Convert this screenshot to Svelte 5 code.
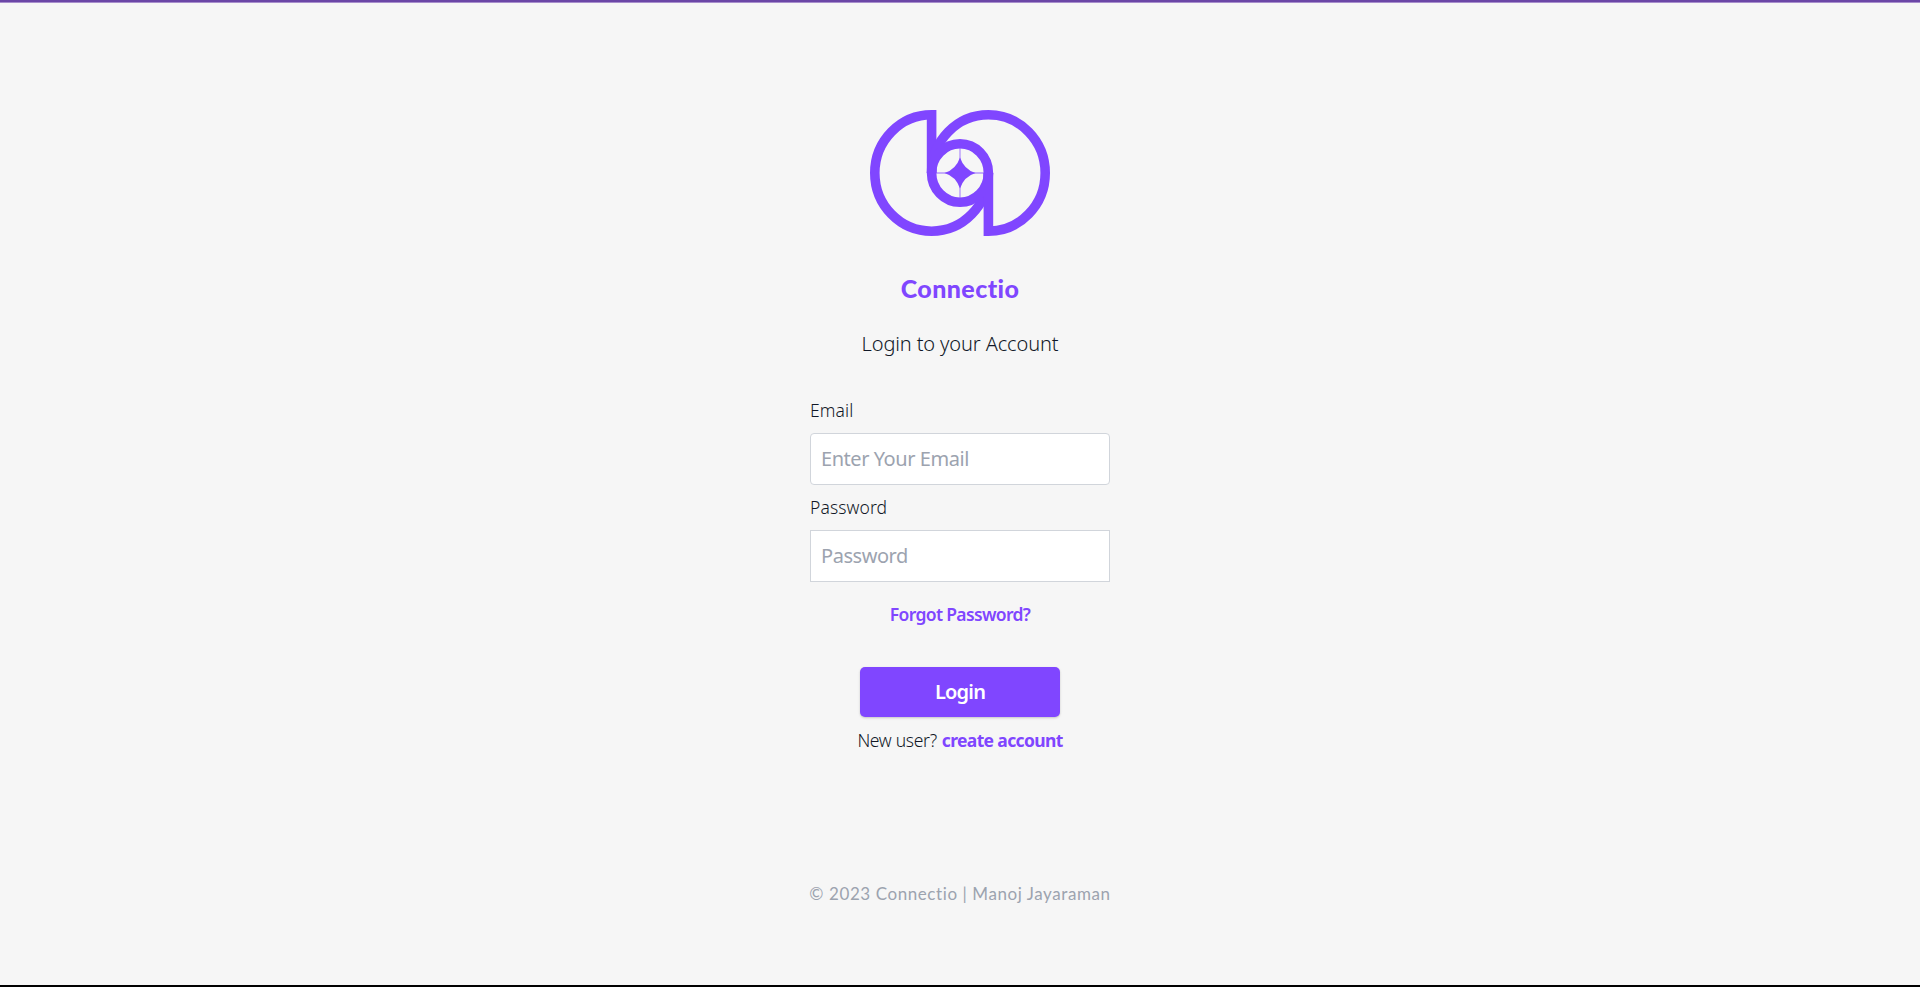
<script>
  let email = $state('');
  let password = $state('');
</script>

<main class="page">
  <svg class="logo" viewBox="0 0 180 126" aria-label="Connectio logo">
    <g fill="none" stroke="#8046ff" stroke-width="9.6">
      <path d="M61.6 63V4.8A56.800 58.2 0 1 0 118.4 63" />
      <path d="M118.4 63V121.2A56.800 58.2 0 1 0 61.6 63" />
      <ellipse cx="90" cy="63" rx="28.4" ry="29.2" />
    </g>
    <path d="M66 63H114M90 38V88" stroke="#8046ff" stroke-opacity=".55" stroke-width="1.3" fill="none" />
    <path d="M90 47.500Q94 59.500 105.500 63Q94 66.500 90 78.500Q86 66.500 74.500 63Q86 59.500 90 47.500Z" fill="#8046ff" />
  </svg>
  <h1>Connectio</h1>
  <h2>Login to your Account</h2>
  <form onsubmit={(e) => e.preventDefault()}>
    <label for="email">Email</label>
    <input id="email" class="rounded" type="email" placeholder="Enter Your Email" bind:value={email} />
    <label for="password">Password</label>
    <input id="password" type="password" placeholder="Password" bind:value={password} />
    <a class="forgot" href="#forgot">Forgot Password?</a>
    <button type="submit">Login</button>
  </form>
  <p class="new"><span>New user?</span><a href="#create">create account</a></p>
  <footer>© 2023 Connectio | Manoj Jayaraman</footer>
</main>

<style>
  :global(body) { background: #f6f6f6; overflow: hidden; }
  .page {
    box-sizing: border-box;
    height: 987px;
    border-top: 2px solid #6b46a6;
    border-bottom: 2px solid #000;
    box-shadow: inset 0 1px #a78dcc;
    display: flex;
    flex-direction: column;
    align-items: center;
    font-family: "Noto Sans", sans-serif;
    color: #111827;
  }
  .logo { width: 180px; height: 126px; margin-top: 108px; flex: none; }
  h1, h2, p { margin: 0; white-space: nowrap; }
  h1 { margin-top: 34px; font: 900 25px/36px Lato, sans-serif; color: #8046ff; letter-spacing: .4px; }
  h2 { margin-top: 24px; font-size: 20px; line-height: 28px; font-weight: 350; letter-spacing: -.12px; }
  form { width: 300px; margin-top: 40px; display: flex; flex-direction: column; align-items: center; }
  label { width: 300px; height: 35px; line-height: 24px; font-size: 17.5px; box-sizing: border-box; font-weight: 350; letter-spacing: .1px; }
  input {
    box-sizing: border-box; width: 300px; height: 52px; margin: 0 0 10px; padding: 0 10px 2px;
    border: 1px solid #d1d5db; border-radius: 0; background: #fff; outline: none;
    font: 400 20px/28px "Noto Sans", sans-serif; letter-spacing: -.45px; color: #111827;
  }
  input.rounded { border-radius: 4px; }
  input::placeholder { color: #9ca3af; opacity: 1; }
  a { color: #8046ff; text-decoration: none; font-weight: 700; }
  .forgot { margin-top: 9px; font-size: 17.5px; line-height: 26px; font-weight: 600; white-space: nowrap; letter-spacing: -.65px; }
  button {
    width: 200px; height: 50px; margin-top: 40px; padding: 0; border: 0; border-radius: 5px;
    background: #8046ff; color: #fff; font: 600 20px/28px "Noto Sans", sans-serif; letter-spacing: -.8px;
    box-shadow: 0 1px 3px #0000001a, 0 1px 2px #0000001a;
  }
  .new { margin-top: 10px; font-size: 17.5px; line-height: 26px; display: flex; gap: 5px; font-weight: 350; letter-spacing: -.3px; }
  .new a { letter-spacing: -.65px; }
  footer { margin-top: 128px; font: 400 17px/26px Lato, sans-serif; color: #9ca3af; white-space: nowrap; letter-spacing: .58px; }
</style>
